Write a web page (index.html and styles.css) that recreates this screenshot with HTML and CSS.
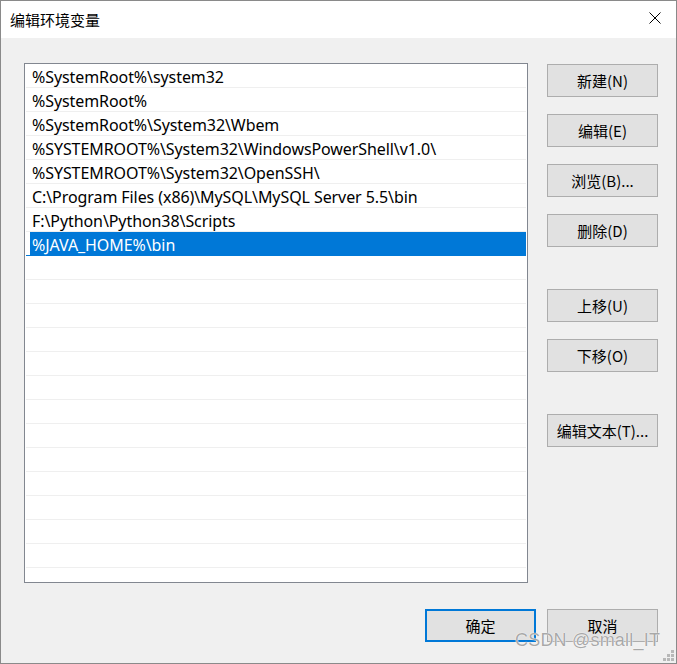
FILE: index.html
```html
<!DOCTYPE html>
<html lang="zh-CN">
<head>
<meta charset="utf-8">
<title>编辑环境变量</title>
<link rel="stylesheet" href="styles.css">
</head>
<body>
<div class="window">
  <div class="titlebar">
    <span class="title">编辑环境变量</span>
    <svg class="close" width="12" height="12" viewBox="0 0 12 12"><path d="M0.5 0.5 L11.5 11.5 M11.5 0.5 L0.5 11.5" stroke="#000" stroke-width="1" fill="none"/></svg>
  </div>
  <div class="content">
    <div class="main">
      <div class="list">
        <div class="row"><span class="label">%SystemRoot%\system32</span></div>
        <div class="row"><span class="label">%SystemRoot%</span></div>
        <div class="row"><span class="label">%SystemRoot%\System32\Wbem</span></div>
        <div class="row"><span class="label">%SYSTEMROOT%\System32\WindowsPowerShell\v1.0\</span></div>
        <div class="row"><span class="label">%SYSTEMROOT%\System32\OpenSSH\</span></div>
        <div class="row"><span class="label">C:\Program Files (x86)\MySQL\MySQL Server 5.5\bin</span></div>
        <div class="row"><span class="label">F:\Python\Python38\Scripts</span></div>
        <div class="row selected"><span class="label">%JAVA_HOME%\bin</span></div>
        <div class="row"><span class="label"></span></div>
        <div class="row"><span class="label"></span></div>
        <div class="row"><span class="label"></span></div>
        <div class="row"><span class="label"></span></div>
        <div class="row"><span class="label"></span></div>
        <div class="row"><span class="label"></span></div>
        <div class="row"><span class="label"></span></div>
        <div class="row"><span class="label"></span></div>
        <div class="row"><span class="label"></span></div>
        <div class="row"><span class="label"></span></div>
        <div class="row"><span class="label"></span></div>
        <div class="row"><span class="label"></span></div>
        <div class="row"><span class="label"></span></div>
        <div class="row"><span class="label"></span></div>
      </div>
      <div class="side">
        <button class="btn">新建(N)</button>
        <button class="btn">编辑(E)</button>
        <button class="btn">浏览(B)...</button>
        <button class="btn">删除(D)</button>
        <button class="btn group">上移(U)</button>
        <button class="btn">下移(O)</button>
        <button class="btn group">编辑文本(T)...</button>
      </div>
    </div>
    <div class="footer">
      <button class="btn primary">确定</button>
      <button class="btn">取消</button>
    </div>
  </div>
  <div class="watermark">CSDN @small_IT</div>
  <svg class="grip" width="11" height="11" viewBox="0 0 11 11">
    <g fill="#b8b8b8">
      <rect x="8" y="0" width="3" height="3"/>
      <rect x="4" y="4" width="3" height="3"/>
      <rect x="8" y="4" width="3" height="3"/>
      <rect x="0" y="8" width="3" height="3"/>
      <rect x="4" y="8" width="3" height="3"/>
      <rect x="8" y="8" width="3" height="3"/>
    </g>
  </svg>
</div>
</body>
</html>
```
FILE: styles.css
```css
html, body {
  margin: 0;
  padding: 0;
}
body {
  font-family: "Noto Sans", "Noto Sans CJK SC", sans-serif;
  font-size: 15px;
  color: #000;
}
.window {
  position: relative;
  width: 677px;
  height: 664px;
  box-sizing: border-box;
  border: 1px solid #8a8a8a;
  display: flex;
  flex-direction: column;
  background: #f0f0f0;
  overflow: hidden;
}
.titlebar {
  height: 37px;
  background: #fff;
  display: flex;
  align-items: center;
  justify-content: space-between;
  padding: 0 15px 0 9px;
  flex: none;
}
.title {
  font-family: "Noto Sans CJK SC", sans-serif;
  font-size: 15px;
  line-height: 1;
  margin-top: -1px;
}
.close {
  display: block;
  margin-top: -3px;
}
.content {
  flex: 1;
  display: flex;
  flex-direction: column;
  padding: 25px 18px 0 23px;
}
.main {
  display: flex;
  gap: 19px;
}
.list {
  width: 504px;
  height: 520px;
  box-sizing: border-box;
  border: 1px solid #828790;
  background: #fff;
  padding: 0 1px;
  overflow: hidden;
  flex: none;
}
.row {
  height: 24px;
  box-sizing: border-box;
  border-bottom: 1px solid #efefef;
  display: flex;
}
.label {
  flex: 1;
  margin-left: 4px;
  padding-left: 2px;
  padding-top: 3px;
  line-height: 20px;
  white-space: nowrap;
  font-family: "Noto Sans", sans-serif;
  font-size: 16px;
  letter-spacing: -0.08px;
}
.row.selected {
  border-bottom-color: #0078d7;
}
.row.selected .label {
  background: #0078d7;
  color: #fff;
}
.side {
  display: flex;
  flex-direction: column;
  gap: 17px;
  padding-top: 1px;
}
.btn {
  width: 111px;
  height: 33px;
  box-sizing: border-box;
  border: 1px solid #adadad;
  background: #e1e1e1;
  font-family: "Noto Sans CJK SC", sans-serif;
  font-size: 15px;
  color: #000;
  padding: 0;
  margin: 0;
  line-height: 1;
}
.btn.group {
  margin-top: 25px;
}
.btn.primary {
  border: 2px solid #0078d7;
}
.footer {
  display: flex;
  justify-content: flex-end;
  gap: 11px;
  margin-top: 26px;
}
.watermark {
  position: absolute;
  left: 514px;
  top: 629px;
  font-family: "Liberation Sans", sans-serif;
  font-size: 18px;
  color: rgba(140, 140, 140, 0.75);
  text-shadow: 0 0 1px #fff, 0 0 1px #fff;
  letter-spacing: 0.2px;
}
.grip {
  position: absolute;
  right: 2px;
  bottom: 2px;
}
```
